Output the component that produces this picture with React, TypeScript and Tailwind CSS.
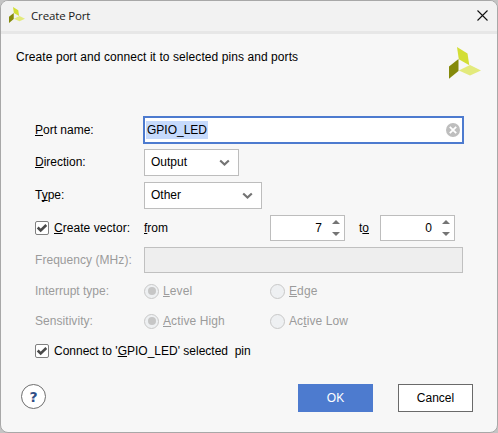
import React from "react";

function Logo({ size, className = "" }: { size: number; className?: string }) {
  return (
    <svg width={size} height={size} viewBox="0 0 32 32" className={`block shrink-0 ${className}`}>
      <path d="M8 0L18.5 6.5L20.3 18.2L9.8 12.2Z" fill="#d3de35" />
      <path d="M0 19.5L9.5 12V24L0 31.8Z" fill="#858a0b" />
      <path d="M9.8 23.5L21 18L32 23.5L21 28.5Z" fill="#e3ea7c" />
    </svg>
  );
}

function U({ children }: { children: React.ReactNode }) {
  return (
    <span className="underline decoration-1 underline-offset-[1px] [text-decoration-skip-ink:none]">
      {children}
    </span>
  );
}

function Check() {
  return (
    <span className="flex size-[14px] shrink-0 items-center justify-center rounded-[2px] border border-[#808080] bg-white">
      <svg width="12" height="12" viewBox="0 0 12 12" fill="none">
        <path d="M1.7 5.5L4.7 8.5L10.3 3" stroke="#4a4a4a" strokeWidth="2.5" />
      </svg>
    </span>
  );
}

function Chevron() {
  return (
    <svg width="11" height="8" viewBox="0 0 11 8" fill="none">
      <path d="M1.2 1.5L5.5 5.5L9.8 1.5" stroke="#747474" strokeWidth="2.2" />
    </svg>
  );
}

function Select({ value, width }: { value: string; width: string }) {
  return (
    <div className={`flex h-[27px] items-center justify-between border border-[#bdbdbd] bg-white pr-[8px] pl-[6px] ${width}`}>
      <span className="pb-[2px]">{value}</span>
      <Chevron />
    </div>
  );
}

function Spinner({ value }: { value: string }) {
  return (
    <div className="flex h-[26px] w-[75px] items-center justify-end gap-[10px] border border-[#bdbdbd] bg-white pr-[4px]">
      <span>{value}</span>
      <svg width="8" height="16" viewBox="0 0 8 16" fill="#747474">
        <path d="M0 4L4 0L8 4Z" />
        <path d="M0 12L4 16L8 12Z" />
      </svg>
    </div>
  );
}

function Radio({ on, children }: { on?: boolean; children: React.ReactNode }) {
  return (
    <div className="flex w-[126px] shrink-0 items-center gap-[4px]">
      <span className="flex size-[15px] items-center justify-center rounded-full border border-[#c8c8c8] bg-[#eef0f2]">
        {on && <span className="size-[8px] rounded-full bg-[#c6c6c6]" />}
      </span>
      <span className="tracking-[0.1px] whitespace-nowrap">{children}</span>
    </div>
  );
}

export default function App() {
  return (
    <div className="h-[433px] w-[498px] overflow-hidden bg-[#c4c4c4] font-['Liberation_Sans',Arial,sans-serif] text-[12px] leading-[14px] text-black">
      <div className="flex h-[433px] w-[498px] flex-col overflow-hidden rounded-[8px] border border-[#a8a8a8] bg-[#f7f7f7]">
        <div className="flex h-[33px] shrink-0 items-center border-b-[3px] border-[#e7e7e7] bg-[#f2f2f2] pr-[9px] pl-[8px]">
          <Logo size={16} className="mb-[2px]" />
          <span className="ml-[6px] flex-1 font-['Open_Sans','Noto_Sans',sans-serif] text-[11.5px] tracking-[-0.15px] text-[#1a1a1a]">
            Create Port
          </span>
          <svg width="11" height="11" viewBox="0 0 11 11" stroke="#111" strokeWidth="1.1" className="mb-[1px]">
            <path d="M0.5 0.5L10.5 10.5M10.5 0.5L0.5 10.5" />
          </svg>
        </div>

        <div className="flex h-[82px] shrink-0 items-start justify-between pr-[16px] pl-[15px]">
          <span className="mt-[16px] tracking-[0.075px]">Create port and connect it to selected pins and ports</span>
          <span className="mt-[13px]">
            <Logo size={32} />
          </span>
        </div>

        <div className="flex flex-col pl-[34px]">
          <div className="flex h-[28px] items-center">
            <span className="w-[108px]"><U>P</U>ort name:</span>
            <div className="flex h-[28px] w-[321px] items-center justify-between border-2 border-[#4d7bcf] bg-white pr-[2px] pl-[1px]">
              <span className="h-[18px] bg-[#c6dafc] px-[1px] leading-[18px]">GPIO_LED</span>
              <svg width="14" height="14" viewBox="0 0 14 14">
                <circle cx="7" cy="7" r="7" fill="#bebebe" />
                <path d="M3.8 3.8L10.2 10.2M10.2 3.8L3.8 10.2" stroke="#fff" strokeWidth="1.8" />
              </svg>
            </div>
          </div>
          <div className="mt-[5px] flex h-[27px] items-center">
            <span className="w-[109px] pb-[2px]"><U>D</U>irection:</span>
            <Select value="Output" width="w-[95px]" />
          </div>
          <div className="mt-[6px] flex h-[27px] items-center">
            <span className="w-[109px] pb-[2px]">T<U>y</U>pe:</span>
            <Select value="Other" width="w-[118px]" />
          </div>
          <div className="mt-[6px] flex h-[26px] items-center">
            <Check />
            <span className="ml-[5px] w-[90px] tracking-[0.05px]"><U>C</U>reate vector:</span>
            <span className="w-[126px]"><U>f</U>rom</span>
            <Spinner value="7" />
            <span className="w-[35px] pl-[14px]">t<U>o</U></span>
            <Spinner value="0" />
          </div>
          <div className="mt-[6px] flex h-[26px] items-center">
            <span className="w-[109px] tracking-[0.05px] text-[#9b9b9b]">Frequency (MHz):</span>
            <div className="h-[26px] w-[319px] border border-[#c0c0c0] bg-[#eeeeee]" />
          </div>
          <div className="mt-[10px] flex h-[16px] items-center text-[#9b9b9b]">
            <span className="w-[109px]">Interrupt type:</span>
            <Radio on><U>L</U>evel</Radio>
            <Radio><U>E</U>dge</Radio>
          </div>
          <div className="mt-[14px] flex h-[16px] items-center text-[#9b9b9b]">
            <span className="w-[109px] tracking-[0.05px]">Sensitivity:</span>
            <Radio on><U>A</U>ctive High</Radio>
            <Radio>Ac<U>t</U>ive Low</Radio>
          </div>
          <div className="mt-[15px] flex h-[14px] items-center">
            <Check />
            <span className="ml-[5px] whitespace-pre">Connect to '<U>G</U>PIO_LED' selected  pin</span>
          </div>
        </div>

        <div className="mt-[26px] flex h-[28px] items-start pl-[20px]">
          <button className="flex size-[25px] items-center justify-center rounded-full border border-[#6e6e6e] bg-white font-['DejaVu_Sans',sans-serif] text-[14px] font-bold text-[#2f4e86]">
            ?
          </button>
          <button className="ml-[252px] h-[28px] w-[75px] bg-[#4d7bcf] text-white">OK</button>
          <button className="ml-[25px] h-[28px] w-[75px] border border-[#6a6a6a] bg-white">Cancel</button>
        </div>
      </div>
    </div>
  );
}
